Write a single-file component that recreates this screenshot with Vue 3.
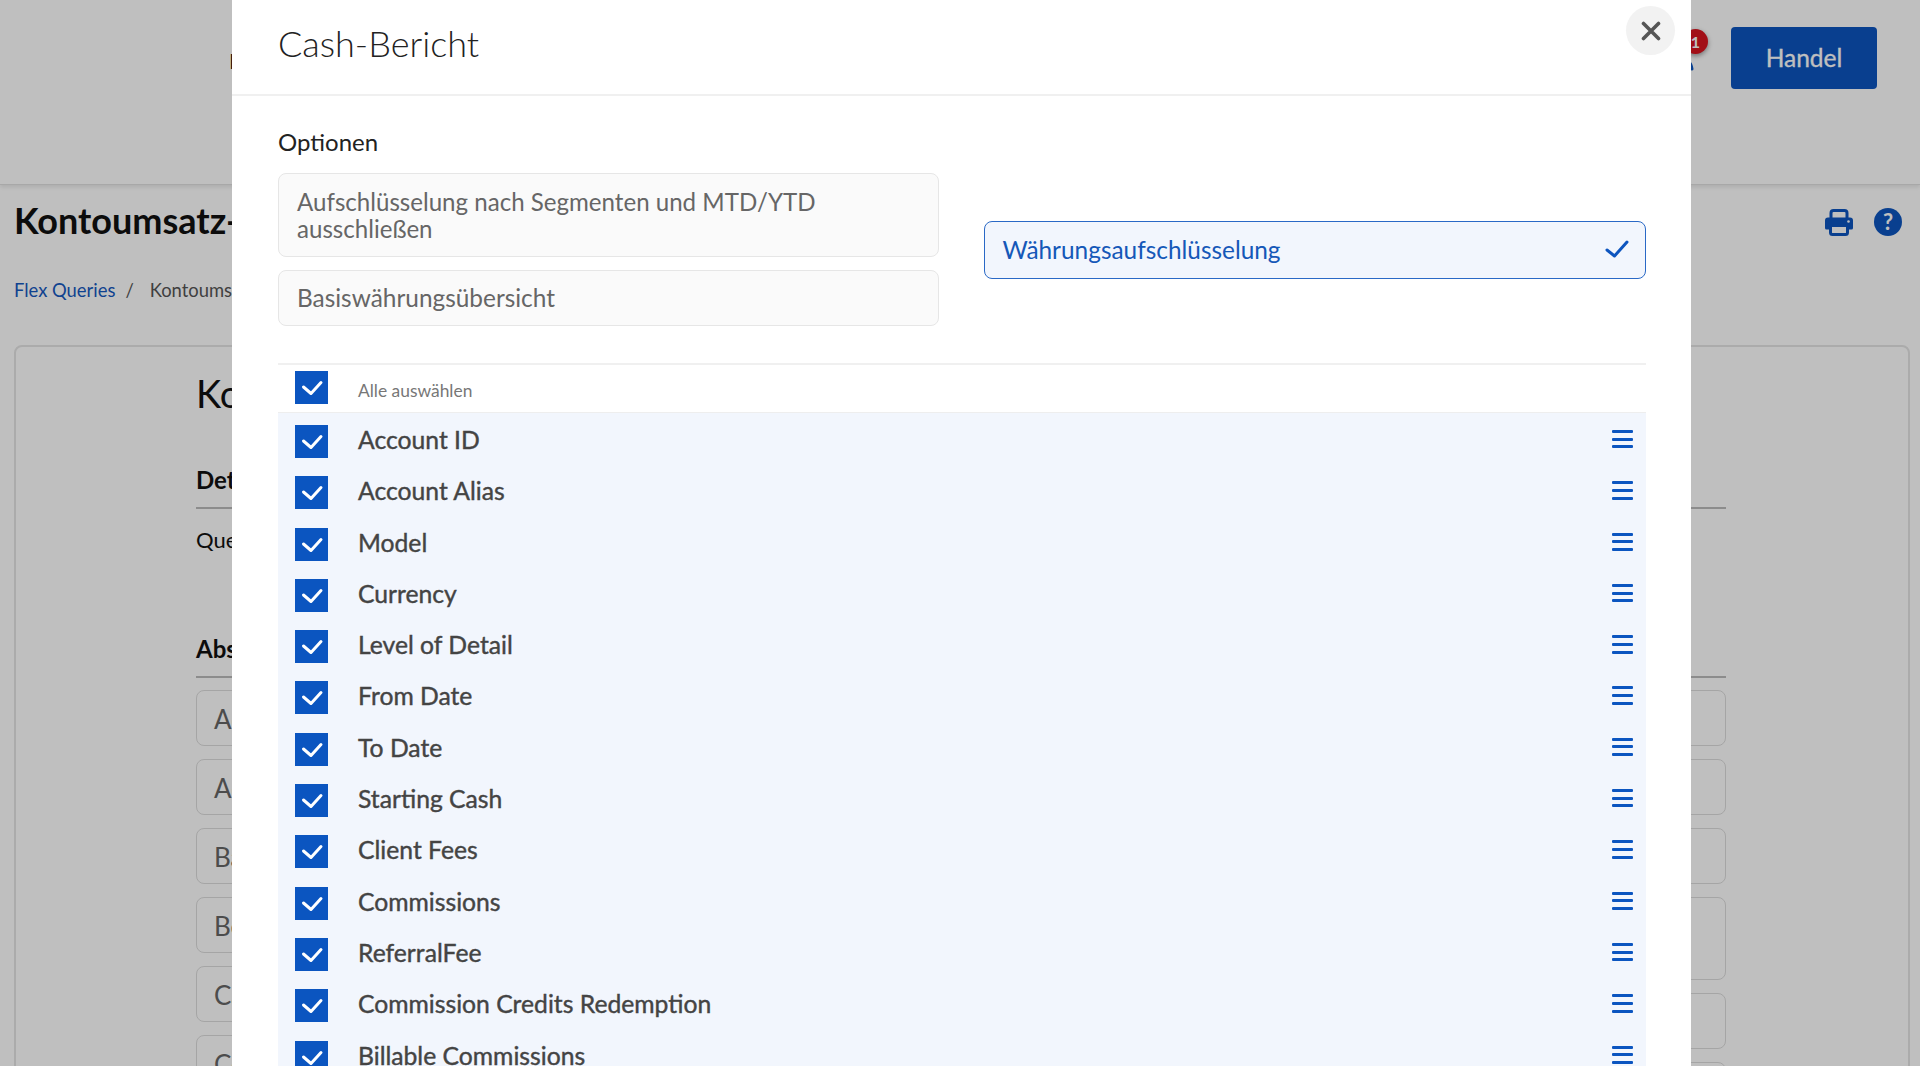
<script setup>
const columns = [
  "Account ID",
  "Account Alias",
  "Model",
  "Currency",
  "Level of Detail",
  "From Date",
  "To Date",
  "Starting Cash",
  "Client Fees",
  "Commissions",
  "ReferralFee",
  "Commission Credits Redemption",
  "Billable Commissions",
];

const leftFields = ["Account ID", "Account Alias", "Basis", "Beginn", "Cash", "Commissions"];
const rightFields = [
  { id: 1, tall: false },
  { id: 2, tall: false },
  { id: 3, tall: false },
  { id: 4, tall: true },
  { id: 5, tall: false },
  { id: 6, tall: false },
];
</script>

<template>
  <div class="page">
    <header class="navbar">
      <span class="nav-item">Berichte</span>
      <div class="nav-right">
        <div class="user">
          <svg width="30" height="30" viewBox="0 0 30 30" fill="none" stroke="#0d55bf" stroke-width="3" stroke-linecap="round">
            <circle cx="15" cy="10" r="6.5" />
            <path d="M4 28c1-7 5-10 11-10s10 3 11 10" />
          </svg>
          <span class="badge">1</span>
        </div>
        <button class="trade-btn">Handel</button>
      </div>
    </header>

    <main class="content">
      <div class="title-row">
        <h1 class="page-title">Kontoumsatz-Bericht</h1>
        <div class="tools">
          <svg width="28" height="27" viewBox="0 0 28 27" fill="none">
            <path d="M6 9V4a2.500 2.500 0 0 1 2.500-2.500h11A2.500 2.500 0 0 1 22 4v5" stroke="#0d55bf" stroke-width="3" />
            <path d="M3 8.500h22a3 3 0 0 1 3 3V19a1.500 1.500 0 0 1-1.500 1.500H24V17H4v3.500H1.500A1.500 1.500 0 0 1 0 19v-7.500a3 3 0 0 1 3-3z" fill="#0d55bf" />
            <path d="M5.500 16.500h17v7a2 2 0 0 1-2 2h-13a2 2 0 0 1-2-2z" stroke="#0d55bf" stroke-width="3" />
            <circle cx="23.500" cy="12.500" r="1.300" fill="#fff" />
          </svg>
          <span class="help">?</span>
        </div>
      </div>
      <nav class="crumbs">
        <a class="crumb-link">Flex Queries</a>
        <span class="crumb-sep">/</span>
        <span>Kontoumsatz-Bericht</span>
      </nav>

      <section class="card">
        <h2 class="card-title">Kontoumsatz-Bericht</h2>
        <h3 class="section-title">Details</h3>
        <p class="query-label">Query-Name</p>
        <h3 class="section-title second">Abschnitte</h3>
        <div class="field-grid">
          <div class="field-col">
            <div v-for="name in leftFields" :key="name" class="field">{{ name }}</div>
          </div>
          <div class="field-col">
            <div v-for="f in rightFields" :key="f.id" class="field" :class="{ tall: f.tall }"></div>
          </div>
        </div>
      </section>
    </main>

    <div class="backdrop"></div>

    <div class="modal">
      <div class="modal-head">
        <h2 class="modal-title">Cash-Bericht</h2>
        <button class="close-btn" aria-label="Schließen">
          <svg width="20" height="20" viewBox="0 0 20 20" fill="none" stroke="#555" stroke-width="3.600" stroke-linecap="round">
            <path d="M2.500 2.500l15 15M17.500 2.500l-15 15" />
          </svg>
        </button>
      </div>

      <div class="modal-body">
        <div class="options-label">Optionen</div>
        <div class="options">
          <div class="option-col">
            <div class="option">Aufschlüsselung nach Segmenten und MTD/YTD ausschließen</div>
            <div class="option">Basiswährungsübersicht</div>
          </div>
          <div class="option selected">
            <span>Währungsaufschlüsselung</span>
            <svg width="24" height="18" viewBox="0 0 24 18" fill="none" stroke="#0d55bf" stroke-width="3" stroke-linecap="round" stroke-linejoin="round">
              <path d="M2 10l7.500 6L22 2" />
            </svg>
          </div>
        </div>

        <div class="select-all">
          <span class="check">
            <svg width="33" height="33" viewBox="0 0 33 33" fill="none" stroke="#fff" stroke-width="3" stroke-linecap="round" stroke-linejoin="round">
              <path d="M8.500 16l7.500 6.500L26 11.500" />
            </svg>
          </span>
          <span class="select-all-text">Alle auswählen</span>
        </div>

        <div class="rows">
          <div v-for="col in columns" :key="col" class="row">
            <span class="check">
              <svg width="33" height="33" viewBox="0 0 33 33" fill="none" stroke="#fff" stroke-width="3" stroke-linecap="round" stroke-linejoin="round">
                <path d="M8.500 16l7.500 6.500L26 11.500" />
              </svg>
            </span>
            <span class="row-name">{{ col }}</span>
            <span class="handle"><i></i><i></i><i></i></span>
          </div>
        </div>
      </div>
    </div>
  </div>
</template>

<style>
html,
body {
  margin: 0;
  overflow: hidden;
}
</style>

<style scoped>
.page {
  position: relative;
  height: 1066px;
  overflow: hidden;
  background: #fff;
  font-family: Lato, "Liberation Sans", sans-serif;
  color: #111;
}

.navbar {
  height: 185px;
  box-sizing: border-box;
  display: flex;
  justify-content: space-between;
  align-items: flex-start;
  padding: 27px 43px 0 229px;
  border-bottom: 1px solid #e0e0e0;
  box-shadow: 0 2px 4px rgba(0, 0, 0, 0.1);
}

.nav-item {
  margin-top: 20px;
  font-size: 22px;
  line-height: 28px;
}

.nav-right {
  display: flex;
  gap: 35px;
}

.user {
  position: relative;
  margin-top: 14px;
  width: 30px;
  height: 30px;
}

.badge {
  position: absolute;
  left: 17px;
  top: -12px;
  width: 25px;
  height: 25px;
  border-radius: 50%;
  background: #d9141f;
  color: #fff;
  font-size: 16px;
  font-weight: 700;
  line-height: 25px;
  text-align: center;
  box-shadow: 0 2px 5px rgba(0, 0, 0, 0.4);
}

.trade-btn {
  width: 146px;
  height: 62px;
  padding: 0 0 2px;
  border: 0;
  border-radius: 4px;
  background: #0d55bf;
  color: #fff;
  font: 400 24.500px Lato, sans-serif;
  -webkit-text-stroke: 0.3px #fff;
}

.content {
  padding: 0 10px 0 14px;
}

.title-row {
  display: flex;
  justify-content: space-between;
  align-items: flex-start;
  margin-top: 15px;
  height: 40px;
}

.page-title {
  margin: 0;
  font-size: 36px;
  font-weight: 700;
  line-height: 40px;
}

.tools {
  display: flex;
  align-items: center;
  gap: 21px;
  margin: 8px 8px 0 0;
}

.help {
  width: 28px;
  height: 28px;
  border-radius: 50%;
  background: #0d55bf;
  color: #fff;
  font-size: 22px;
  font-weight: 700;
  line-height: 28px;
  text-align: center;
}

.crumbs {
  display: flex;
  margin-top: 37.500px;
  font-size: 18.400px;
  line-height: 24px;
  color: #555;
}

.crumb-link {
  color: #1558c0;
}

.crumb-sep {
  margin: 0 16px 0 10px;
}

.card {
  margin-top: 43px;
  height: 800px;
  box-sizing: border-box;
  border: 2px solid #e4e4e4;
  border-radius: 8px;
  padding: 24px 182px 0 180px;
}

.card-title {
  margin: 0;
  font-size: 38px;
  font-weight: 400;
  line-height: 44px;
}

.section-title {
  margin: 50px 0 0;
  padding-bottom: 12px;
  border-bottom: 2px solid #bbb;
  font-size: 24px;
  font-weight: 700;
  line-height: 30px;
}

.section-title.second {
  margin-top: 80px;
}

.query-label {
  margin: 17.500px 0 0;
  font-size: 22px;
  line-height: 28px;
}

.field-grid {
  display: grid;
  grid-template-columns: 1fr 1fr;
  gap: 45px;
  margin-top: 12px;
}

.field-col {
  display: flex;
  flex-direction: column;
  gap: 13px;
}

.field {
  height: 56px;
  box-sizing: border-box;
  border: 1px solid #ddd;
  border-radius: 8px;
  padding-left: 17px;
  font-size: 26px;
  line-height: 56px;
  color: #666;
}

.field.tall {
  height: 83px;
}

.backdrop {
  position: absolute;
  inset: 0;
  background: rgba(0, 0, 0, 0.25);
}

.modal {
  position: absolute;
  left: 232px;
  top: 0;
  width: 1459px;
  height: 1066px;
  overflow: hidden;
  background: #fff;
}

.modal-head {
  position: relative;
  height: 96px;
  box-sizing: border-box;
  padding: 21px 46px 0;
  border-bottom: 2px solid #f0f0f0;
}

.modal-title {
  margin: 0;
  font-size: 36px;
  font-weight: 300;
  line-height: 44px;
  color: #222;
}

.close-btn {
  position: absolute;
  top: 6px;
  right: 16px;
  width: 49px;
  height: 49px;
  display: flex;
  align-items: center;
  justify-content: center;
  border: 0;
  border-radius: 50%;
  background: #f2f2f2;
}

.modal-body {
  padding: 0 45px 0 46px;
}

.options-label {
  margin-top: 31px;
  font-size: 24px;
  line-height: 30px;
  color: #222;
}

.options {
  display: grid;
  grid-template-columns: 661px 1fr;
  gap: 44.500px;
  align-items: center;
  margin-top: 16px;
}

.option-col {
  display: flex;
  flex-direction: column;
  gap: 13px;
}

.option {
  box-sizing: border-box;
  border: 1px solid #e6e6e6;
  border-radius: 8px;
  background: #fafafa;
  padding: 13.500px 18px 14.500px;
  font-size: 24.100px;
  line-height: 27px;
  color: #666;
}

.option-col .option:last-child {
  padding: 13px 18px 14px;
  font-size: 24.400px;
}

.option.selected {
  display: flex;
  justify-content: space-between;
  align-items: center;
  height: 58px;
  padding: 0 16px 1px 18px;
  border: 1.500px solid #2a69c6;
  background: #f2f6fd;
  color: #1558b8;
  font-size: 24.400px;
}

.select-all {
  display: flex;
  align-items: flex-start;
  height: 50px;
  box-sizing: border-box;
  margin-top: 37px;
  padding: 6px 0 0 17px;
  border-top: 2px solid #f0f0f0;
  border-bottom: 1px solid #eee;
}

.select-all-text {
  margin: 9px 0 0 30px;
  font-size: 17.400px;
  line-height: 22px;
  color: #777;
}

.check {
  flex: none;
  width: 33px;
  height: 33px;
  background: #0b55c0;
  display: block;
}

.check svg {
  display: block;
}

.rows {
  background: #f2f6fd;
}

.row {
  display: flex;
  align-items: flex-start;
  height: 51.300px;
  box-sizing: border-box;
  padding: 12px 0 0 17px;
}

.row-name {
  margin-left: 30px;
  font-size: 24.700px;
  line-height: 30px;
  color: #444;
  -webkit-text-stroke: 0.4px #444;
}

.handle {
  margin-left: auto;
  margin-right: 13px;
  padding-top: 5px;
  width: 21px;
  display: flex;
  flex-direction: column;
  gap: 4.700px;
}

.handle i {
  display: block;
  height: 3px;
  border-radius: 1px;
  background: #0b55c0;
}
</style>
